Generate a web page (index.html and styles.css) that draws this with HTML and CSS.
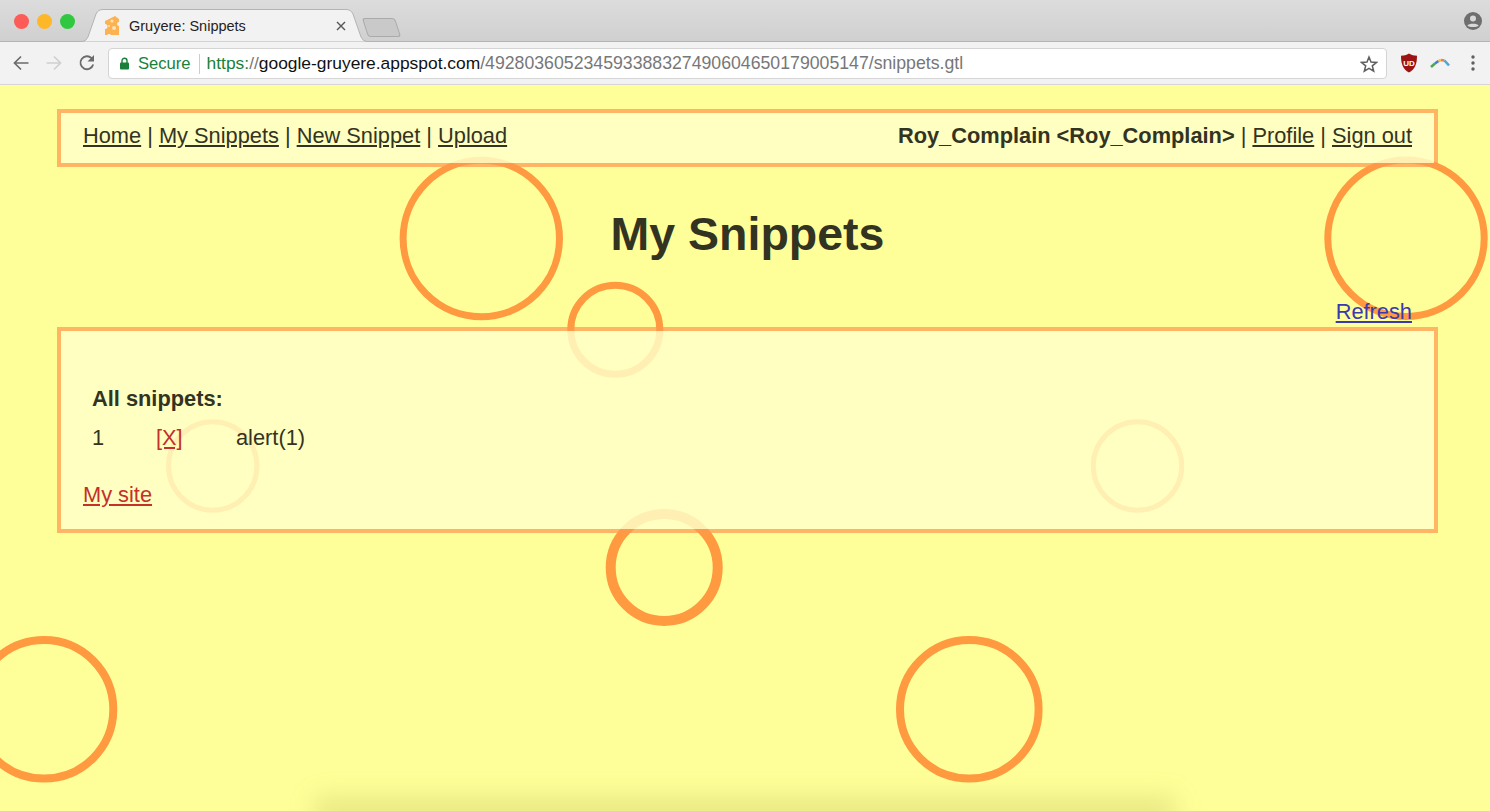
FILE: index.html
```html
<!DOCTYPE html>
<html lang="en">
<head>
    <meta charset="UTF-8">
    <meta name="viewport" content="width=device-width, initial-scale=1.0">
    <title>Gruyere: Snippets</title>
    <link rel="stylesheet" href="styles.css">
</head>
<body>
    <header class="browser">
        <div class="tabstrip">
            <div class="lights">
                <span class="light red"></span>
                <span class="light yellow"></span>
                <span class="light green"></span>
            </div>
            <div class="tab">
                <svg class="tab-shape" width="288" height="33" viewBox="0 0 288 33">
                    <path d="M0 32.5 H1 Q5 32.5 7 28 L15 5 Q17 0.5 22 0.5 H265 Q270 0.5 272 5 L280 28 Q282 32.5 286 32.5 H288 V33 H0 Z" fill="#f2f2f2" stroke="#b4b4b4"/>
                </svg>
                <svg class="favicon" width="16" height="20" viewBox="0 0 16 20">
                    <path d="M1 5 L11 0 L15 3 V6 A2 2 0 0 0 15 10 V19 H7 A2.5 2.5 0 0 0 3 19 H1 V13 A2.5 2.5 0 0 0 1 8 Z" fill="#fdb251"/>
                    <circle cx="8" cy="5" r="1.6" fill="#ffe3b4"/>
                    <circle cx="10" cy="12" r="2" fill="#ffe3b4"/>
                    <circle cx="5" cy="10" r="1" fill="#ffe3b4"/>
                </svg>
                <span class="tab-title">Gruyere: Snippets</span>
                <svg class="tab-close" width="10" height="10" viewBox="0 0 10 10">
                    <path d="M1 1 L9 9 M9 1 L1 9" stroke="#555" stroke-width="1.4"/>
                </svg>
            </div>
            <div class="new-tab"></div>
            <svg class="profile" width="18" height="18" viewBox="0 0 18 18">
                <circle cx="9" cy="9" r="9" fill="#6e6e6e"/>
                <circle cx="9" cy="6.6" r="3" fill="#d8d8d8"/>
                <path d="M3.4 13.6 C4.5 11 13.5 11 14.6 13.6 C13 15.6 5 15.6 3.4 13.6 Z" fill="#d8d8d8"/>
            </svg>
        </div>
        <div class="toolbar">
            <svg class="nav-icon" width="18" height="18" viewBox="0 0 18 18">
                <path d="M16.5 9 H2.5 M9 2.5 L2.5 9 L9 15.5" fill="none" stroke="#6b6b6b" stroke-width="1.7"/>
            </svg>
            <svg class="nav-icon" width="18" height="18" viewBox="0 0 18 18">
                <path d="M1.5 9 H15.5 M9 2.5 L15.5 9 L9 15.5" fill="none" stroke="#cfcfcf" stroke-width="1.7"/>
            </svg>
            <svg class="nav-icon" width="18" height="18" viewBox="0 0 18 18">
                <path d="M15.2 10.5 A6.5 6.5 0 1 1 13.6 4.2" fill="none" stroke="#6b6b6b" stroke-width="1.8"/>
                <path d="M16 1 V7.5 H9.5 Z" fill="#6b6b6b"/>
            </svg>
            <div class="omnibox">
                <svg class="lock" width="11" height="13" viewBox="0 0 11 13">
                    <path d="M3 6 V3.8 A2.5 2.5 0 0 1 8 3.8 V6" fill="none" stroke="#1a8039" stroke-width="1.4"/>
                    <rect x="1" y="5.5" width="9" height="7" rx="1" fill="#1a8039"/>
                </svg>
                <span class="secure">Secure</span>
                <span class="url"><span class="scheme">https:</span><span class="dim">//</span><span class="host">google-gruyere.appspot.com</span><span class="dim path">/492803605234593388327490604650179005147/snippets.gtl</span></span>
                <svg class="star" width="18" height="18" viewBox="0 0 18 18">
                    <path d="M9 2 L11 7 L16.5 7.4 L12.3 10.8 L13.7 16.2 L9 13.3 L4.3 16.2 L5.7 10.8 L1.5 7.4 L7 7 Z" fill="none" stroke="#5f5f5f" stroke-width="1.5"/>
                </svg>
            </div>
            <svg class="ublock" width="18" height="20" viewBox="0 0 18 20">
                <path d="M9 0.5 C11.5 2 14 2.7 17 2.8 C17 11 15 16.5 9 19.5 C3 16.5 1 11 1 2.8 C4 2.7 6.5 2 9 0.5 Z" fill="#9c1313"/>
                <text x="9" y="12.5" text-anchor="middle" class="ublock-text">UD</text>
            </svg>
            <svg class="arc" width="20" height="10" viewBox="0 0 20 10">
                <path d="M1 9 L5 5.5" stroke="#4fa84f" stroke-width="2.6" fill="none"/>
                <path d="M5 5.5 L8.5 3" stroke="#3f7fd8" stroke-width="2.6" fill="none"/>
                <path d="M8.5 3 L11 2" stroke="#f3c13a" stroke-width="2.6" fill="none"/>
                <path d="M11 2 L14.5 2.5" stroke="#ea7a6a" stroke-width="2.6" fill="none"/>
                <path d="M14.5 2.5 L19 7.5" stroke="#4aa8d8" stroke-width="2.6" fill="none"/>
            </svg>
            <svg class="dots" width="4" height="16" viewBox="0 0 4 16">
                <circle cx="2" cy="2" r="1.7" fill="#5f5f5f"/>
                <circle cx="2" cy="8" r="1.7" fill="#5f5f5f"/>
                <circle cx="2" cy="14" r="1.7" fill="#5f5f5f"/>
            </svg>
        </div>
    </header>

    <main class="page">
        <svg class="holes" width="1490" height="726" viewBox="0 85 1490 726">
            <circle cx="481.3" cy="238.5" r="78.2" stroke-width="7"/>
            <circle cx="1406" cy="238.3" r="78.2" stroke-width="7"/>
            <circle cx="615.3" cy="329.7" r="44.5" stroke-width="7"/>
            <circle cx="212.7" cy="466" r="44.2" stroke-width="5"/>
            <circle cx="1137.5" cy="466" r="44.2" stroke-width="5"/>
            <circle cx="664.2" cy="567.5" r="53.5" stroke-width="10"/>
            <circle cx="44" cy="709.3" r="69.3" stroke-width="8"/>
            <circle cx="969.3" cy="709.3" r="69.3" stroke-width="8"/>
        </svg>
        <div class="bottom-shadow"></div>

        <nav class="menu">
            <div>
                <a href="#">Home</a> | <a href="#">My Snippets</a> | <a href="#">New Snippet</a> | <a href="#">Upload</a>
            </div>
            <div>
                <b>Roy_Complain &lt;Roy_Complain&gt;</b> | <a href="#">Profile</a> | <a href="#">Sign out</a>
            </div>
        </nav>

        <h1>My Snippets</h1>
        <div class="refresh"><a href="#">Refresh</a></div>

        <section class="content">
            <div class="snippets">
                <h2>All snippets:</h2>
                <div class="snippet-row">
                    <span class="num">1</span>
                    <a class="del" href="#">[X]</a>
                    <span>alert(1)</span>
                </div>
            </div>
            <a class="site" href="#">My site</a>
        </section>
    </main>
</body>
</html>
```

FILE: styles.css
```css
html, body {
    margin: 0;
    padding: 0;
    height: 811px;
    overflow: hidden;
}

body {
    font-family: "Liberation Sans", Arial, sans-serif;
    background-color: #ffff99;
    color: #333322;
}

/* browser window */
.browser {
    height: 85px;
}

.tabstrip {
    height: 42px;
    box-sizing: border-box;
    display: flex;
    align-items: flex-end;
    position: relative;
    padding-left: 14px;
    background: linear-gradient(#dcdcdc, #d0d0d0);
    border-bottom: 1px solid #b4b4b4;
}

.lights {
    display: flex;
    gap: 8px;
    align-self: flex-start;
    margin-top: 14px;
    margin-right: 6px;
}

.light {
    width: 15px;
    height: 15px;
    border-radius: 50%;
}

.red { background-color: #fc5b57; }
.yellow { background-color: #fdb728; }
.green { background-color: #2fc840; }

.tab {
    position: relative;
    width: 288px;
    height: 33px;
    margin-bottom: -1px;
    display: flex;
    align-items: center;
}

.tab-shape {
    position: absolute;
    left: 0;
    top: 0;
}

.favicon {
    position: relative;
    margin-left: 23px;
}

.tab-title {
    position: relative;
    margin-left: 9px;
    font-size: 14.5px;
    color: #222;
}

.tab-close {
    position: relative;
    margin-left: auto;
    margin-right: 23px;
}

.new-tab {
    width: 31px;
    height: 17px;
    margin-left: -4px;
    margin-bottom: 4px;
    background-color: #c9c9c9;
    border: 1px solid #aaa;
    border-radius: 3px;
    transform: skewX(18deg);
}

.profile {
    position: absolute;
    right: 8px;
    top: 12px;
}

.toolbar {
    height: 43px;
    box-sizing: border-box;
    display: flex;
    align-items: center;
    padding: 0 15px 0 12px;
    background-color: #f2f2f2;
    border-bottom: 1px solid #d6d6d6;
}

.nav-icon {
    margin-right: 15px;
}

.nav-icon:nth-child(3) {
    margin-right: 12px;
}

.omnibox {
    flex: 1;
    height: 31px;
    box-sizing: border-box;
    display: flex;
    align-items: center;
    margin-top: 1px;
    padding: 0 8px 0 10px;
    background-color: #fff;
    border: 1px solid #d4d4d4;
    border-radius: 4px;
    font-size: 17.4px;
    white-space: nowrap;
}

.lock {
    margin-right: 8px;
}

.secure {
    color: #1a8039;
    font-size: 16.6px;
    padding-right: 8px;
    margin-right: 7px;
    border-right: 1px solid #ccc;
    line-height: 20px;
}

.scheme { color: #1a8039; }
.host { color: #111; }
.dim { color: #777; }
.path { font-size: 17.7px; }

.star {
    margin-left: auto;
}

.ublock {
    margin-left: 13px;
}

.ublock-text {
    font-family: "Liberation Sans", Arial, sans-serif;
    font-size: 8px;
    font-weight: bold;
    fill: #fff;
}

.arc {
    margin-left: 12px;
}

.dots {
    margin-left: 21px;
}

/* page */
.page {
    position: relative;
    height: 726px;
    box-sizing: border-box;
    padding: 24px 52px 0 57px;
    overflow: hidden;
    font-size: 21.8px;
}

.holes {
    position: absolute;
    left: 0;
    top: 0;
}

.holes circle {
    fill: none;
    stroke: #ff9a40;
}

.bottom-shadow {
    position: absolute;
    left: 315px;
    width: 860px;
    bottom: -16px;
    height: 30px;
    background-color: rgba(150, 150, 60, 0.22);
    filter: blur(12px);
}

a {
    color: inherit;
}

.menu, .content {
    position: relative;
    background-color: rgba(255, 255, 200, 0.84);
    background-clip: padding-box;
    border: 4px solid rgba(255, 153, 78, 0.72);
}

.menu {
    height: 58px;
    box-sizing: border-box;
    display: flex;
    justify-content: space-between;
    align-items: center;
    padding: 0 22px 4px;
}

h1 {
    position: relative;
    margin: 38px 0 0;
    text-align: center;
    font-size: 46.5px;
    line-height: 58px;
}

.refresh {
    position: relative;
    margin-top: 36px;
    padding-right: 26px;
    text-align: right;
    line-height: 26px;
    height: 26px;
}

.refresh a {
    color: #3a3ab0;
}

.content {
    height: 206px;
    box-sizing: border-box;
    margin-top: 2px;
    padding: 55px 22px 0;
}

.snippets {
    padding-left: 9px;
}

h2 {
    margin: 0;
    font-size: 21.8px;
    line-height: 26px;
}

.snippet-row {
    display: flex;
    margin-top: 13px;
    line-height: 25px;
}

.num {
    width: 64px;
}

.del {
    width: 80px;
    color: #c4302a;
}

.site {
    display: inline-block;
    margin-top: 32px;
    line-height: 26px;
    color: #c4302a;
}
```
